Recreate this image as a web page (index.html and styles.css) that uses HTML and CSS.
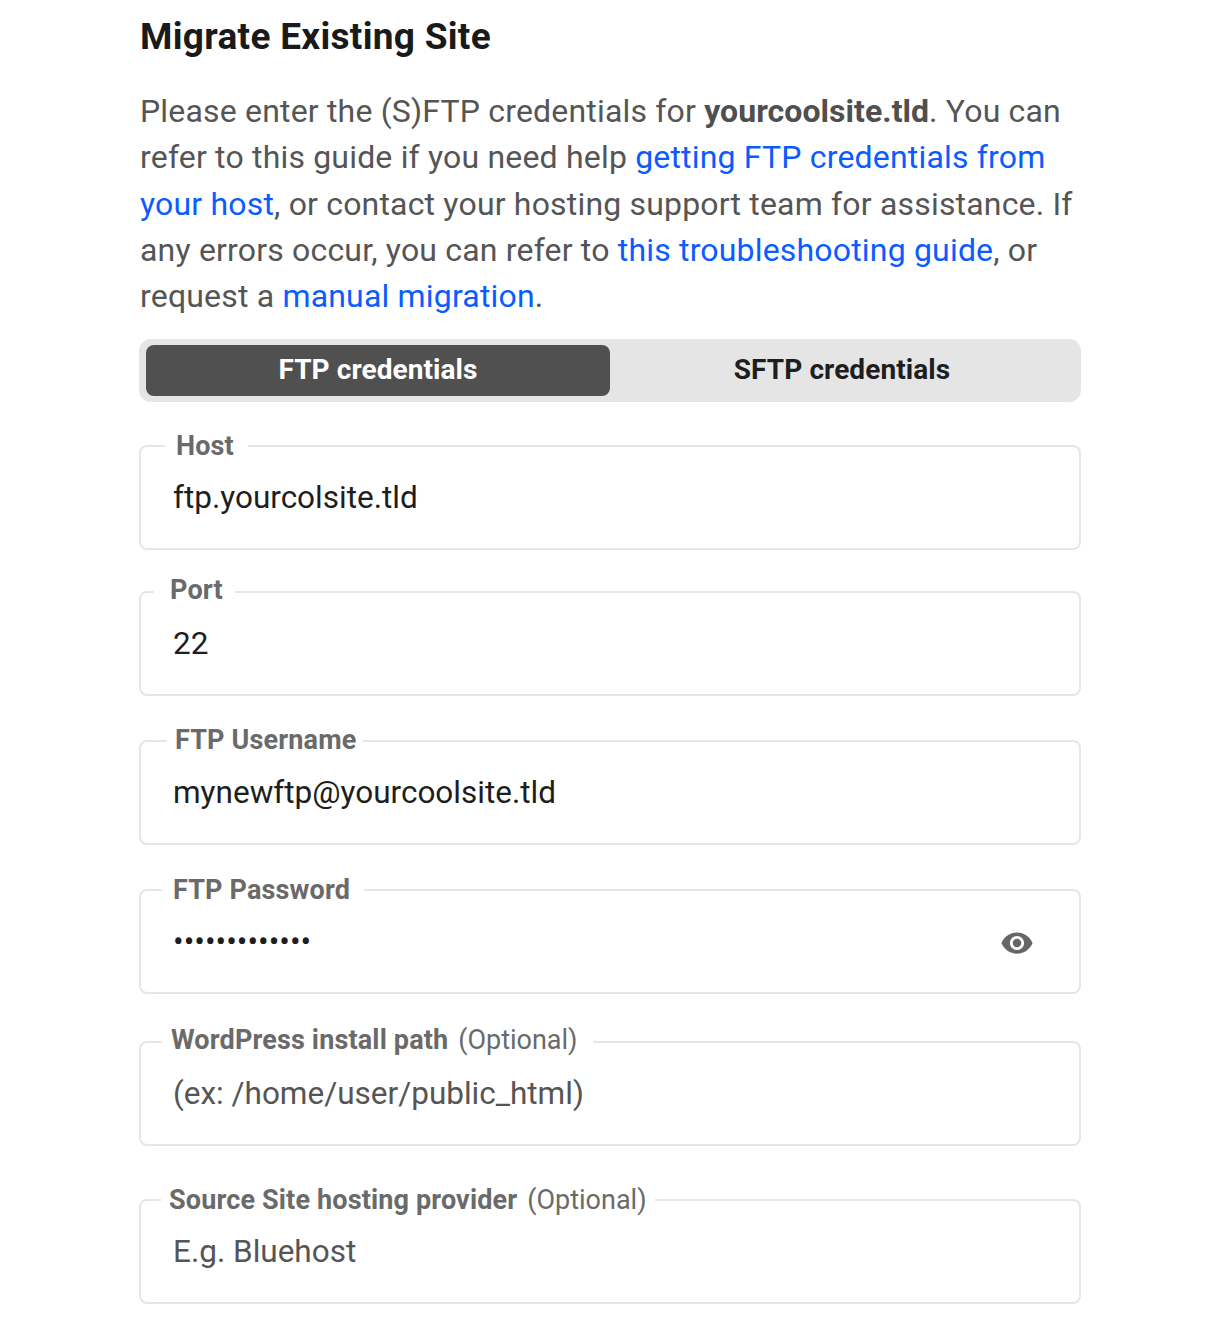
FILE: index.html
```html
<!DOCTYPE html>
<html lang="en">
<head>
<meta charset="utf-8">
<title>Migrate Existing Site</title>
<link rel="stylesheet" href="styles.css">
</head>
<body>
<main class="page">
  <h1 class="title">Migrate Existing Site</h1>
  <p class="intro">Please enter the (S)FTP credentials for <strong>yourcoolsite.tld</strong>. You can refer to this guide if you need help <a href="#">getting FTP credentials from your host</a>, or contact your hosting support team for assistance. If any errors occur, you can refer to <a href="#">this troubleshooting guide</a>, or request a <a href="#">manual migration</a>.</p>
  <div class="tabs">
    <button class="tab tab-active" type="button">FTP credentials</button>
    <button class="tab" type="button">SFTP credentials</button>
  </div>
  <fieldset class="field field-host">
    <legend class="label">Host</legend>
    <div class="value">ftp.yourcolsite.tld</div>
  </fieldset>
  <fieldset class="field field-port">
    <legend class="label">Port</legend>
    <div class="value">22</div>
  </fieldset>
  <fieldset class="field field-user">
    <legend class="label">FTP Username</legend>
    <div class="value">mynewftp@yourcoolsite.tld</div>
  </fieldset>
  <fieldset class="field field-pass">
    <legend class="label">FTP Password</legend>
    <div class="value-row">
      <div class="value value-dots">•••••••••••••</div>
      <svg class="eye" viewBox="0 0 24 24" aria-hidden="true"><path d="M12 4.5C7 4.5 2.73 7.61 1 12c1.73 4.39 6 7.5 11 7.5s9.27-3.11 11-7.5c-1.73-4.39-6-7.5-11-7.5zM12 17c-2.76 0-5-2.24-5-5s2.24-5 5-5 5 2.24 5 5-2.24 5-5 5zm0-8c-1.66 0-3 1.34-3 3s1.34 3 3 3 3-1.34 3-3-1.34-3-3-3z"/></svg>
    </div>
  </fieldset>
  <fieldset class="field field-path">
    <legend class="label">WordPress install path <span class="optional">(Optional)</span></legend>
    <div class="value value-hint">(ex: /home/user/public_html)</div>
  </fieldset>
  <fieldset class="field field-source">
    <legend class="label">Source Site hosting provider <span class="optional">(Optional)</span></legend>
    <div class="value value-hint">E.g. Bluehost</div>
  </fieldset>
</main>
</body>
</html>
```
FILE: styles.css
```css
* { box-sizing: border-box; }
html, body { margin: 0; padding: 0; background: #fff; }
body { font-family: Roboto, "Liberation Sans", sans-serif; color: #1e1e1e; }
.page { width: 942px; margin-left: 139px; padding-top: 15px; height: 1323px; overflow: hidden; }
.title { margin: 0 0 0 1px; font-size: 37px; line-height: 44px; font-weight: 700; letter-spacing: 0.3px; color: #1a1a1a; }
.intro { margin: 29px 0 0 1px; font-size: 32px; line-height: 46.3px; color: #555; letter-spacing: 0.18px; }
.intro strong { font-weight: 700; color: #4f4f4f; letter-spacing: 0.05px; }
.intro a { color: #0a5cff; text-decoration: none; }
.tabs { display: flex; margin-top: 19.5px; height: 63px; padding: 6px 7px; background: #e5e5e5; border-radius: 12px; }
.tab { flex: 1 1 50%; border: 0; background: transparent; font: 700 28px Roboto, sans-serif; letter-spacing: 0.08px; color: #1e1e1e; border-radius: 8px; padding: 0 0 1px; }
.tab-active { background: #505050; color: #fff; }
.field { --lift: 0px; --gap-left: 20px; --pad-left: 10px; --pad-right: 14px; display: block; min-width: 0; margin: 0; padding: 0 0 30px; border: 2px solid #e6e6e6; border-radius: 8px; }
.field-host { --gap-left: 24px; --pad-left: 11px; --pad-right: 14px; margin-top: 29px; }
.field-port { --lift: 2px; --gap-left: 13px; --pad-left: 16px; --pad-right: 12px; margin-top: 25px; }
.field-user { --lift: 1px; --gap-left: 26px; --pad-left: 8px; --pad-right: 7px; margin-top: 29px; }
.field-pass { --gap-left: 21px; --pad-left: 11px; --pad-right: 14px; margin-top: 30px; }
.field-path { --lift: 2px; --gap-left: 21px; --pad-left: 9px; --pad-right: 15px; margin-top: 31px; }
.field-source { --gap-left: 20px; --pad-left: 8px; --pad-right: 8px; margin-top: 39px; }
.label { font-size: 27px; line-height: 30px; font-weight: 700; letter-spacing: 0.15px; color: #6a6a6a; margin-left: var(--gap-left); padding: 0 var(--pad-right) calc(var(--lift) * 2) var(--pad-left); white-space: nowrap; }
.optional { font-weight: 400; letter-spacing: 0; margin-left: 3px; }
.value { font-size: 31.5px; line-height: 40px; color: #1e1e1e; margin: calc(17px - var(--lift)) 0 0 32px; }
.value-hint { color: #555; }
.value-row { display: flex; justify-content: space-between; }
.eye { width: 34px; height: 34px; fill: #666; margin: 21px 45px 0 0; }
```
